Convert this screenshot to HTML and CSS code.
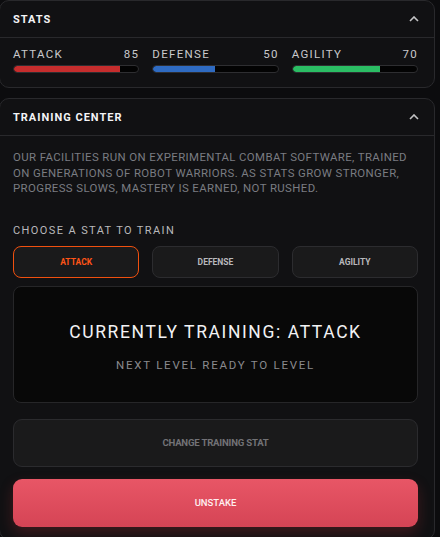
FILE: index.html
```html
<!DOCTYPE html>
<html>
<head>
<meta charset="utf-8">
<link rel="stylesheet" href="styles.css">
</head>
<body>
<div class="page">
  <section class="card stats-card">
    <header class="card-head">
      <h2 class="card-title">STATS</h2>
      <svg class="chev" width="10" height="6" viewBox="0 0 10 6"><path d="M1 5 L5 1 L9 5" fill="none" stroke="#c4c4c6" stroke-width="1.6"/></svg>
    </header>
    <div class="stats-body">
      <div class="stat">
        <div class="stat-row"><span>ATTACK</span><span>85</span></div>
        <div class="bar"><div class="fill red" style="width:85%"></div></div>
      </div>
      <div class="stat">
        <div class="stat-row"><span>DEFENSE</span><span>50</span></div>
        <div class="bar"><div class="fill blue" style="width:50%"></div></div>
      </div>
      <div class="stat">
        <div class="stat-row"><span>AGILITY</span><span>70</span></div>
        <div class="bar"><div class="fill green" style="width:70%"></div></div>
      </div>
    </div>
  </section>

  <section class="card training-card">
    <header class="card-head">
      <h2 class="card-title">TRAINING CENTER</h2>
      <svg class="chev" width="10" height="6" viewBox="0 0 10 6"><path d="M1 5 L5 1 L9 5" fill="none" stroke="#c4c4c6" stroke-width="1.6"/></svg>
    </header>
    <div class="training-body">
      <p class="desc">OUR FACILITIES RUN ON EXPERIMENTAL COMBAT SOFTWARE, TRAINED ON GENERATIONS OF ROBOT WARRIORS. AS STATS GROW STRONGER, PROGRESS SLOWS, MASTERY IS EARNED, NOT RUSHED.</p>
      <div class="choose">CHOOSE A STAT TO TRAIN</div>
      <div class="choices">
        <button class="choice active">ATTACK</button>
        <button class="choice">DEFENSE</button>
        <button class="choice">AGILITY</button>
      </div>
      <div class="status">
        <div class="status-title">CURRENTLY TRAINING: ATTACK</div>
        <div class="status-sub">NEXT LEVEL READY TO LEVEL</div>
      </div>
      <button class="btn-change">CHANGE TRAINING STAT</button>
      <button class="btn-unstake">UNSTAKE</button>
    </div>
  </section>
</div>
</body>
</html>
```

FILE: styles.css
```css
* { box-sizing: border-box; }
html, body {
  margin: 0;
  padding: 0;
  background: #0c0c0e;
  font-family: Roboto, "Liberation Sans", sans-serif;
  overflow: hidden;
}
.page {
  width: 436px;
  margin-left: -1px;
  margin-top: 0;
  display: flex;
  flex-direction: column;
  gap: 10px;
}
.card {
  background: #111113;
  border: 1px solid #29292c;
  border-radius: 10px;
}
.card-head {
  height: 37px;
  display: flex;
  align-items: center;
  justify-content: space-between;
  padding: 0 15px 0 13px;
  border-bottom: 1px solid #29292c;
}
.card-title {
  margin: 0;
  font-size: 11px;
  font-weight: 700;
  letter-spacing: 1px;
  color: #f4f4f6;
}
.chev { display: block; }
.stats-body {
  display: grid;
  grid-template-columns: repeat(3, 1fr);
  gap: 13px;
  padding: 9px 16px 14px 13px;
}
.stat-row {
  display: flex;
  justify-content: space-between;
  font-size: 11.5px;
  line-height: 14px;
  letter-spacing: 1.3px;
  color: #c9c9cc;
}
.bar {
  margin-top: 4px;
  height: 8px;
  border: 1px solid #2e2e31;
  border-radius: 4px;
  background: #030303;
  overflow: hidden;
}
.fill { height: 100%; border-radius: 4px 0 0 4px; }
.red { background: #c62d2d; }
.blue { background: #2f6bc2; }
.green { background: #2bbd64; }

.training-body {
  padding: 14px 16px 12px 13px;
  display: flex;
  flex-direction: column;
}
.desc {
  margin: 0;
  font-size: 11.4px;
  line-height: 15.5px;
  letter-spacing: 0.4px;
  color: #7a7c82;
}
.choose {
  margin-top: 27px;
  font-size: 11px;
  line-height: 14px;
  letter-spacing: 1.4px;
  color: #b9b9bc;
}
.choices {
  margin-top: 8px;
  display: grid;
  grid-template-columns: repeat(3, 1fr);
  gap: 13px;
}
.choice {
  height: 32px;
  background: #1a1a1b;
  border: 1px solid #2c2c2f;
  border-radius: 8px;
  font-family: Roboto, sans-serif;
  font-size: 8.5px;
  font-weight: 700;
  color: #b8b8bc;
  padding: 0;
}
.choice.active {
  border-color: #f0500f;
  color: #ff5417;
}
.status {
  margin-top: 8px;
  height: 117px;
  background: #080808;
  border: 1px solid #262628;
  border-radius: 8px;
  display: flex;
  flex-direction: column;
  align-items: center;
  justify-content: center;
  padding-top: 5px;
}
.status-title {
  font-size: 17.5px;
  letter-spacing: 1.6px;
  color: #f2f2f4;
  line-height: 22px;
}
.status-sub {
  margin-top: 15px;
  font-size: 11.5px;
  letter-spacing: 1.75px;
  color: #8a8a8e;
  line-height: 14px;
}
.btn-change {
  margin-top: 16px;
  height: 48px;
  background: #1a1a1b;
  border: 1px solid #2b2b2e;
  border-radius: 9px;
  font-family: Roboto, sans-serif;
  font-size: 9.6px;
  font-weight: 700;
  color: #727276;
  letter-spacing: -0.2px;
}
.btn-unstake {
  margin-top: 12px;
  height: 48px;
  border: none;
  border-radius: 9px;
  background: linear-gradient(#e85666, #d54455);
  box-shadow: 0 6px 14px rgba(200, 50, 60, 0.25);
  font-family: Roboto, sans-serif;
  font-size: 9.5px;
  font-weight: 500;
  color: #fff1f2;
}
```
